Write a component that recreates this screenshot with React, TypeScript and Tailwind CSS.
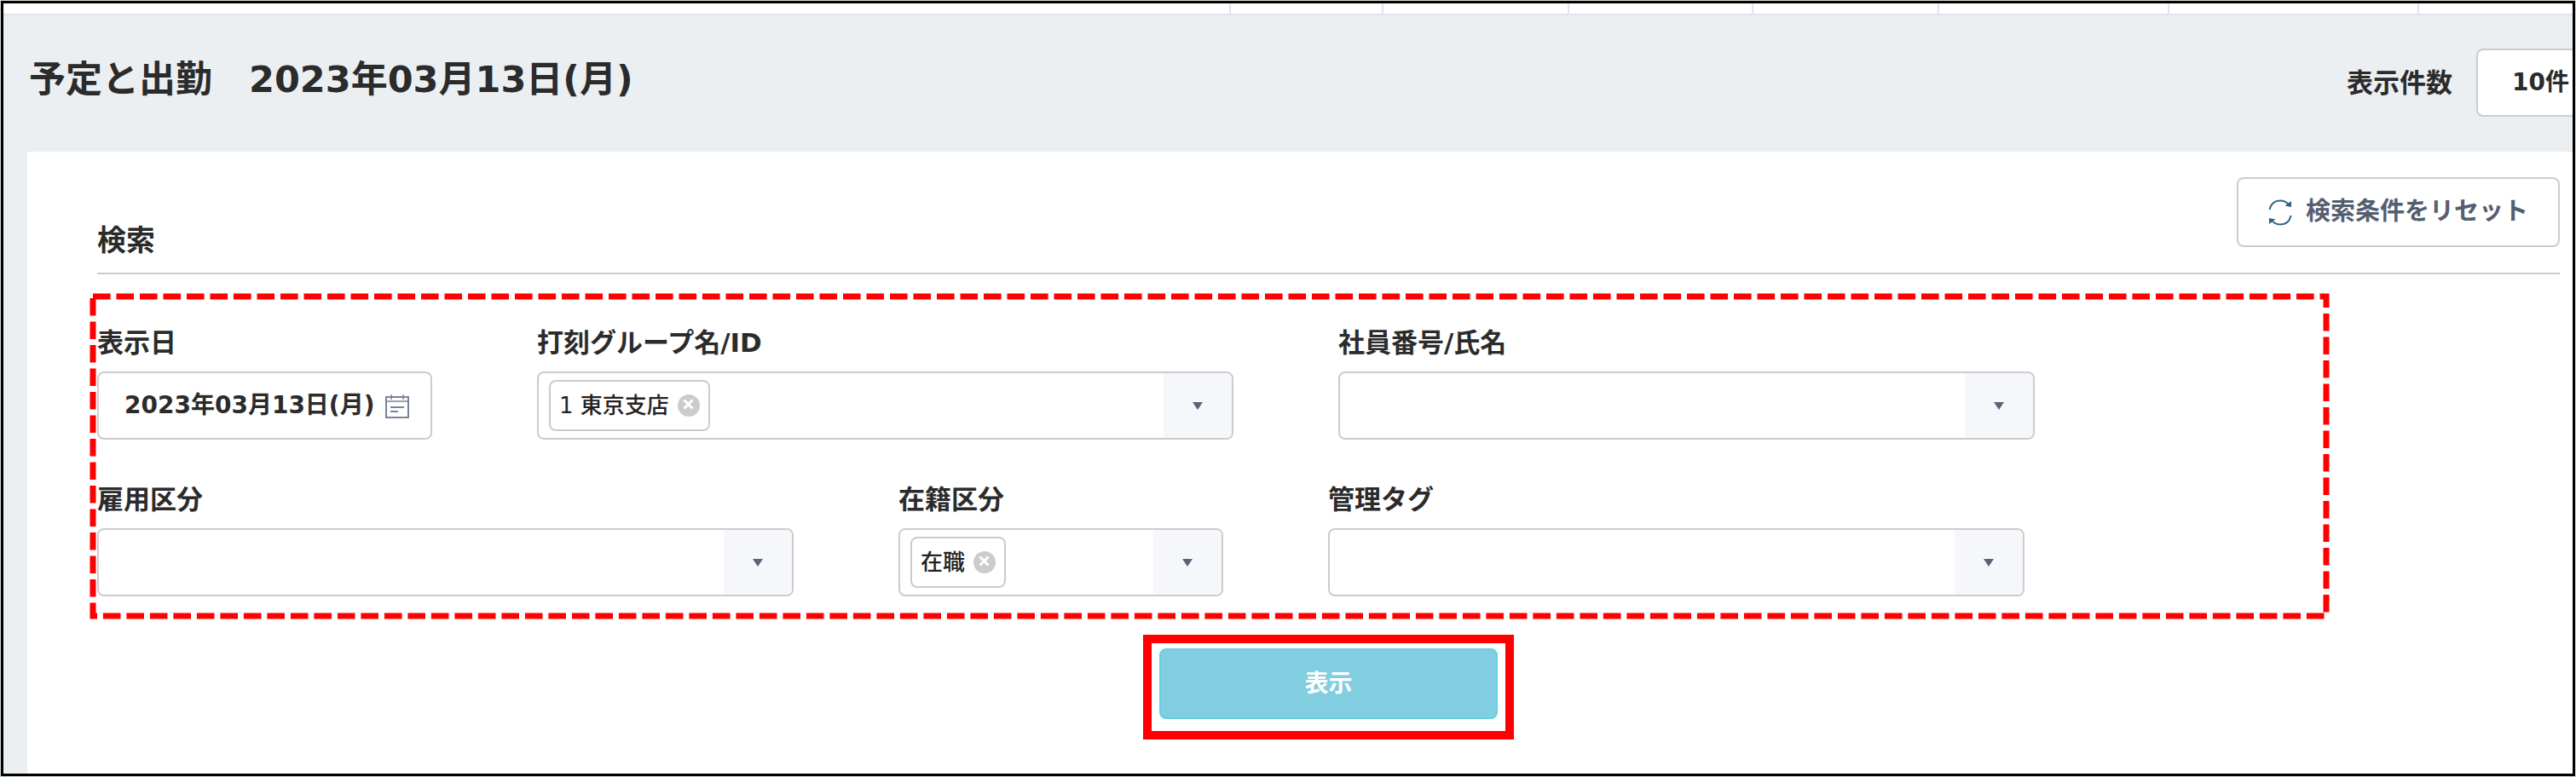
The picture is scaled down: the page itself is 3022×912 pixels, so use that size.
import { useState } from 'react';

const DIVIDERS = ['w-[1440px]', 'w-[179px]', 'w-[218px]', 'w-[216px]', 'w-[218px]', 'w-[270px]', 'w-[293px]'];

const ResetIcon = () => (
  <svg width="28" height="34" viewBox="0 0 28 34" fill="none" stroke="#2c647f" strokeWidth="2">
    <path d="M1.500 14C3 7 8 3.500 14 3.500C18.500 3.500 22 5.500 24.500 9" />
    <path d="M27 4V11L19.500 9.500Z" fill="#2c647f" stroke="none" />
    <path d="M26.500 21C25 28 20 31.500 14 31.500C9.500 31.500 6 29.500 3.500 26" />
    <path d="M1 31V24L8.500 25.500Z" fill="#2c647f" stroke="none" />
  </svg>
);

const CalendarIcon = () => (
  <svg width="30" height="30" viewBox="0 0 30 30" fill="none" stroke="#7a8294" strokeWidth="2">
    <path d="M2 5H28V29H2Z" />
    <path d="M2 10H28" strokeWidth="1.5" />
    <path d="M8 2V8M22 2V8" strokeWidth="1.5" />
    <path d="M7 17H23M7 22H16" />
  </svg>
);

const Tag = ({ label, onRemove }: { label: string; onRemove: () => void }) => (
  <span className="h-[60px] shrink-0 flex items-center gap-2.5 border-2 border-[#cccccc] rounded-lg px-2.5 text-[26px] leading-none font-medium text-[#222222]">
    {label}
    <button type="button" aria-label={`${label} ×`} onClick={onRemove}>
      <svg width="26" height="26" viewBox="0 0 26 26">
        <circle cx="13" cy="13" r="13" fill="#cccccc" />
        <path d="M7.500 6.500L17.500 16.500M17.500 6.500L7.500 16.500" stroke="#fff" strokeWidth="3" />
      </svg>
    </button>
  </span>
);

interface ComboProps {
  id: string;
  label: string;
  width: string;
  initial?: string[];
}

const Combo = ({ id, label, width, initial = [] }: ComboProps) => {
  const [tags, setTags] = useState(initial);

  return (
    <div className={`${width} flex flex-col gap-3.5`}>
      <label htmlFor={id} className="text-[31px] leading-[40px] font-bold">{label}</label>
      <div className="h-20 flex border-2 border-[#cccccc] rounded-lg overflow-hidden bg-white">
        <div className="flex-1 min-w-0 flex items-center pl-3">
          {tags.map(t => (
            <Tag key={t} label={t} onRemove={() => setTags(tags.filter(x => x !== t))} />
          ))}
          <input id={id} type="text" className="flex-1 min-w-0 h-full px-2 text-[26px] outline-none" />
        </div>
        <button type="button" aria-label={label} className="w-20 flex items-center justify-center bg-[#f6f7fb]">
          <svg width="12" height="10" viewBox="0 0 12 10">
            <path d="M0 1H12L6 10Z" fill="#5b6475" />
          </svg>
        </button>
      </div>
    </div>
  );
};

export default function App() {
  const [date, setDate] = useState('2023年03月13日(月)');

  return (
    <div className="min-h-screen flex p-px bg-[#d5dbd7] text-[#2b2b2b] font-['DejaVu_Sans','Noto_Sans_CJK_JP',sans-serif]">
      <div className="flex-1 min-w-0 flex flex-col border-3 border-black bg-[#ebeff2] overflow-hidden">
        <nav className="h-[14px] shrink-0 flex bg-white border-b-2 border-[#e0e4ee]">
          {DIVIDERS.map((w, i) => (
            <div key={i} className={`${w} shrink-0 border-r-2 border-[#e0e4ee]`} />
          ))}
        </nav>

        <header className="h-40 shrink-0 flex items-start justify-between pl-[30px] pt-[39px]">
          <h1 className="pt-1 text-[43px] leading-[64px] font-bold whitespace-nowrap">予定と出勤　2023年03月13日(月)</h1>
          <div className="flex items-center gap-7 -mr-[67px]">
            <label htmlFor="count" className="text-[31px] leading-[40px] font-bold whitespace-nowrap">表示件数</label>
            <select id="count" className="appearance-none w-[180px] h-20 pl-10 border-2 border-[#cccccc] rounded-lg bg-white text-[28px] font-bold">
              <option>10件</option>
              <option>50件</option>
              <option>100件</option>
            </select>
          </div>
        </header>

        <main className="flex-1 ml-7 bg-white pl-[82px] pr-[15px] pt-[30px]">
          <div className="flex items-end justify-between border-b-2 border-[#cccccc]">
            <h2 className="pb-[18px] text-[34px] leading-[40px] font-bold">検索</h2>
            <button
              type="button"
              className="h-[82px] mb-[30px] px-[35px] flex items-center gap-4 border-2 border-[#cccccc] rounded-lg bg-white text-[29px] font-bold text-[#555e70]"
            >
              <ResetIcon />
              検索条件をリセット
            </button>
          </div>

          <form onSubmit={e => e.preventDefault()}>
            <div className="relative mt-[23px] -ml-2 mr-[271px] pl-2 pt-[37px] pb-[26px] flex flex-col gap-[50px]">
              <div className="flex gap-[123px]">
                <div className="w-[393px] flex flex-col gap-3.5">
                  <label htmlFor="date" className="text-[31px] leading-[40px] font-bold">表示日</label>
                  <div className="h-20 flex items-center border-2 border-[#cccccc] rounded-lg bg-white pl-[30px] pr-6">
                    <input
                      id="date"
                      type="text"
                      value={date}
                      onChange={e => setDate(e.target.value)}
                      className="flex-1 min-w-0 text-[28px] font-bold outline-none"
                    />
                    <button type="button" aria-label="表示日">
                      <CalendarIcon />
                    </button>
                  </div>
                </div>
                <Combo id="group" label="打刻グループ名/ID" width="w-[817px]" initial={['1 東京支店']} />
                <Combo id="employee" label="社員番号/氏名" width="w-[817px]" />
              </div>
              <div className="flex gap-[123px]">
                <Combo id="employment" label="雇用区分" width="w-[817px]" />
                <Combo id="enrollment" label="在籍区分" width="w-[381px]" initial={['在職']} />
                <Combo id="admin-tag" label="管理タグ" width="w-[817px]" />
              </div>
              <svg className="absolute left-[3px] top-[3px] w-[calc(100%-6px)] h-[calc(100%-6px)] overflow-visible pointer-events-none">
                <rect width="100%" height="100%" fill="none" stroke="#ff0000" strokeWidth="7" strokeDasharray="20.6 6.9" />
              </svg>
            </div>

            <div className="w-fit mx-auto mt-[19px] border-10 border-[#ff0000] px-[9px] pt-[6px] pb-[14px]">
              <button
                type="submit"
                className="w-[397px] h-[83px] block border-2 border-[#66d0e3] rounded-lg bg-[#81cee0] text-[28px] font-bold text-white"
              >
                表示
              </button>
            </div>
          </form>
        </main>
      </div>
    </div>
  );
}
